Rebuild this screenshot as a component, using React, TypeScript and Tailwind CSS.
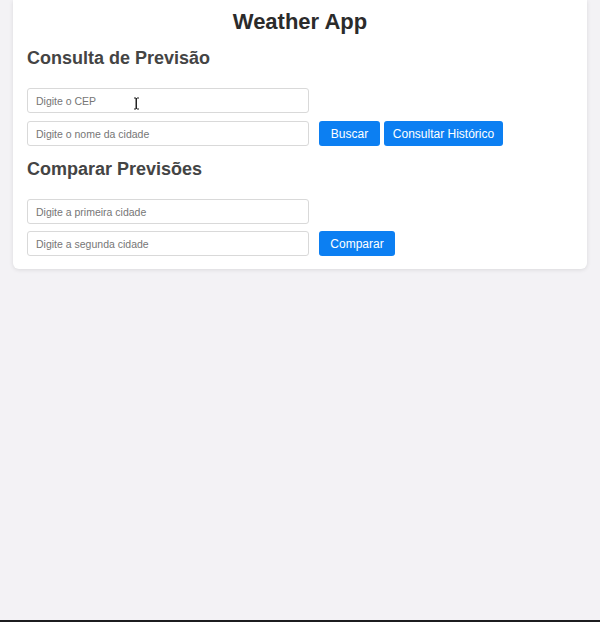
import React from "react";

function Field({ placeholder, cursor }: { placeholder: string; cursor?: boolean }) {
  return (
    <div className="relative">
      <input
        className="block h-[25px] w-[282px] rounded-[3px] border border-[#d9d9d9] bg-white px-[8px] text-[10.5px] text-[#333] outline-none placeholder:text-[#767676]"
        placeholder={placeholder}
      />
      {cursor && (
        <svg className="absolute left-[106px] top-[9px]" width="7" height="13" viewBox="0 0 7 13">
          <path d="M1 1h2v11H1M4 1h2M4 12h2M3.5 1v11" stroke="#222" strokeWidth="1" fill="none" />
        </svg>
      )}
    </div>
  );
}

function Btn({ label, w }: { label: string; w: string }) {
  return (
    <button className={`h-[25px] ${w} rounded-[3px] bg-[#0c7ff2] text-[12px] text-white`}>{label}</button>
  );
}

export default function App() {
  return (
    <div className="flex h-[622px] flex-col bg-[#f3f2f5] font-['Liberation_Sans',Arial,sans-serif]">
      <div className="flex-1">
        <div className="mx-[13px] rounded-b-[6px] bg-white px-[14px] pb-[13px] pt-[9px] shadow-[0_1px_4px_rgba(0,0,0,0.1)]">
          <h1 className="text-center text-[22px] font-bold leading-[26px] text-[#2b2b2b]">Weather App</h1>

          <h2 className="mt-[12px] text-[18px] font-bold leading-[22px] text-[#444]">Consulta de Previsão</h2>
          <div className="mt-[19px] flex flex-col gap-[8px]">
            <Field placeholder="Digite o CEP" cursor />
            <div className="flex items-center">
              <Field placeholder="Digite o nome da cidade" />
              <div className="ml-[10px] flex gap-[4px]">
                <Btn label="Buscar" w="w-[61px]" />
                <Btn label="Consultar Histórico" w="w-[119px]" />
              </div>
            </div>
          </div>

          <h2 className="mt-[12px] text-[18px] font-bold leading-[22px] text-[#444]">Comparar Previsões</h2>
          <div className="mt-[19px] flex flex-col gap-[7px]">
            <Field placeholder="Digite a primeira cidade" />
            <div className="flex items-center">
              <Field placeholder="Digite a segunda cidade" />
              <div className="ml-[10px] flex">
                <Btn label="Comparar" w="w-[76px]" />
              </div>
            </div>
          </div>
        </div>
      </div>
      <div className="h-[2px] bg-[#1c1c1f]" />
    </div>
  );
}
